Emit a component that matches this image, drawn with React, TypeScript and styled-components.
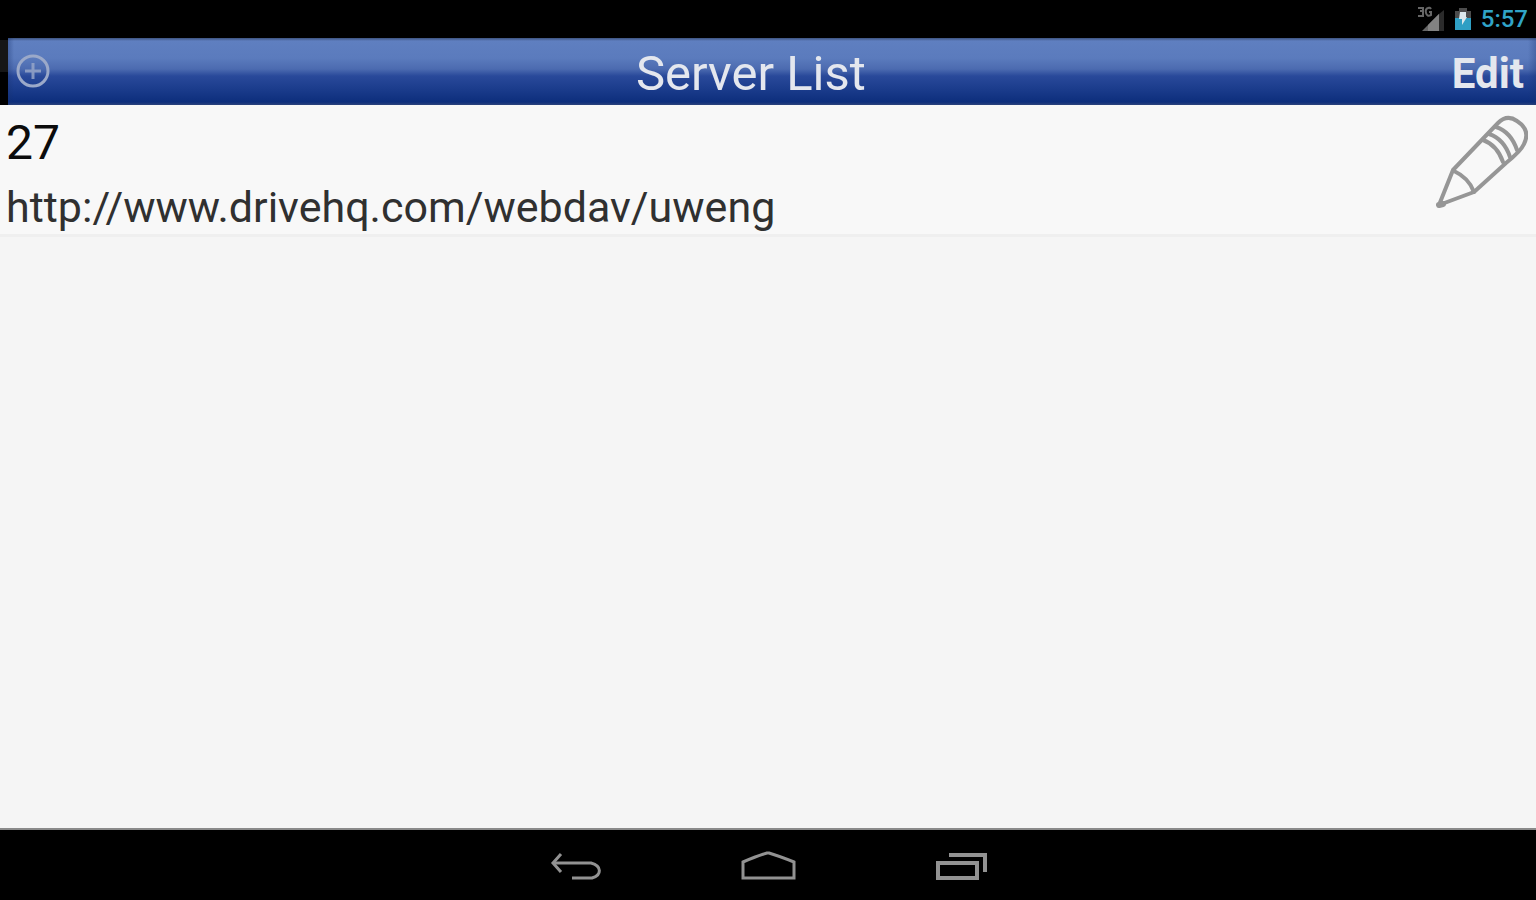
import React from "react";
import styled, { createGlobalStyle } from "styled-components";

const GlobalStyle = createGlobalStyle`
  *, *::before, *::after { box-sizing: border-box; }
  body { margin: 0; background: #000; font-family: Roboto, "Liberation Sans", sans-serif; }
  button { border: 0; padding: 0; margin: 0; background: none; font: inherit; color: inherit; cursor: pointer; }
  h1, h2, p, ul { margin: 0; padding: 0; font-weight: 400; }
  svg { display: block; flex: none; }
`;

const Screen = styled.div`
  min-height: 100vh;
  display: flex;
  flex-direction: column;
`;

const StatusBar = styled.div`
  height: 38px;
  padding: 0 8px;
  display: flex;
  align-items: center;
  justify-content: flex-end;
  gap: 9px;
  background: #000;
`;

const Clock = styled.time`
  font-size: 24px;
  line-height: 28px;
  font-weight: 500;
  color: #30a4c8;
`;

const HeaderFrame = styled.header`
  height: 67px;
  padding-left: 8px;
  background: linear-gradient(#000 0 2px, #161616 2px 50%, #000 50%);
`;

const Header = styled.div`
  height: 100%;
  padding: 0 12px 0 8px;
  display: flex;
  justify-content: space-between;
  align-items: center;
  color: #e4e7ee;
  background:
    linear-gradient(90deg, rgba(24, 50, 110, 0.35), transparent 6px calc(100% - 8px), rgba(24, 50, 110, 0.3)),
    linear-gradient(#3d5380 0, #5f7fc0 3px, #5b7bbd 20px, #4c6bb0 31px, #29499a 38px, #1c3d8d 50px, #0d2e7c 64px, #2c437c 67px);
`;

const AddButton = styled.button`
  line-height: 0;
`;

const Title = styled.h1`
  padding-top: 4px;
  font-size: 49px;
  line-height: 56px;
`;

const EditButton = styled.button`
  && {
    padding-top: 4px;
    font-size: 42px;
    line-height: 48px;
    font-weight: 700;
  }
`;

const Content = styled.main`
  flex: 1;
  background: #f5f5f5;
  border-bottom: 2px solid #8a8a8a;
`;

const ServerRow = styled.li`
  display: flex;
  justify-content: space-between;
  align-items: flex-start;
  padding: 8px 8px 0 6px;
  height: 132px;
  list-style: none;
  background: #f8f8f8;
  border-bottom: 3px solid #efefef;
`;

const ServerName = styled.h2`
  font-size: 48px;
  line-height: 60px;
  color: #0c0c0c;
`;

const ServerUrl = styled.p`
  padding-top: 4px;
  font-size: 43px;
  line-height: 60px;
  color: #303030;
`;

const RowButton = styled.button`
  padding-top: 2px;
`;

const NavBar = styled.nav`
  height: 70px;
  padding-top: 6px;
  display: flex;
  justify-content: center;
  align-items: center;
  gap: 136px;
  background: #000;
`;

const NavButton = styled.button`
  width: 56px;
  height: 36px;
`;

const SignalIcon = () => (
  <svg width="28" height="26" viewBox="0 0 28 26" aria-hidden="true">
    <path d="M22 8 27 4V25H22Z" fill="#2b2b2b" />
    <path d="M5 25 22 8V25Z" fill="#666" />
    <path d="M11 25V19L22 8V25Z" fill="#828282" />
    <path d="M1 2H6V5H3M6 5V10H1M14 3Q13 1 11 2Q8 3 9 7Q10 11 14 9V6H12" fill="none" stroke="#666" strokeWidth="2" />
  </svg>
);

const BatteryIcon = () => (
  <svg width="18" height="24" viewBox="0 0 18 24" aria-hidden="true">
    <path d="M5 1H13V4H17V12H1V4H5Z" fill="#4c4c4c" />
    <path d="M1 11H17V23H1Z" fill="#2f9fc4" />
    <path d="M6 5H12V10H13L8 18V12H5Z" fill="#dce8ec" />
  </svg>
);

const PlusIcon = () => (
  <svg width="34" height="36" viewBox="0 0 34 36" fill="none" stroke="#9ba9c9" aria-hidden="true">
    <circle cx="17" cy="17" r="15" strokeWidth="3" />
    <path d="M9 17H25M17 9V25" strokeWidth="3" strokeOpacity="0.8" />
  </svg>
);

const PencilIcon = () => (
  <svg width="92" height="94" viewBox="0 0 92 94" fill="none" stroke="#969696" strokeWidth="4" strokeLinecap="round" strokeLinejoin="round" aria-hidden="true">
    <path d="M3 90 17 55 62 8Q71 -1 81 6Q95 15 88 29Q85 36 70 48L38 77Z" />
    <path d="M18 56Q33 63 38 77" />
    <path d="M47 25Q61 30 67 47" />
    <path d="M53 19Q68 24 74 42" />
    <path d="M60 12Q75 17 81 35" />
    <path d="M3 90 7 89" strokeWidth="6" />
  </svg>
);

const BackIcon = () => (
  <svg width="56" height="36" viewBox="0 0 56 36" fill="none" stroke="#929292" strokeWidth="3" aria-hidden="true">
    <path d="M6 13H43C54 16 54 25 44 28H24" />
    <path d="M13 4 5 13 13 22" />
  </svg>
);

const HomeIcon = () => (
  <svg width="56" height="36" viewBox="0 0 56 36" fill="none" stroke="#929292" strokeWidth="3" aria-hidden="true">
    <path d="M3 28V12Q17 6 27 3H29Q39 6 54 12V28Z" />
  </svg>
);

const RecentsIcon = () => (
  <svg width="56" height="36" viewBox="0 0 56 36" fill="none" stroke="#929292" aria-hidden="true">
    <path d="M6 13H45V28H6Z" strokeWidth="4" />
    <path d="M17 5H53V22" strokeWidth="4" />
  </svg>
);

const servers = [{ name: "27", url: "http://www.drivehq.com/webdav/uweng" }];

export default function App() {
  return (
    <>
      <GlobalStyle />
      <Screen>
        <StatusBar>
          <SignalIcon />
          <BatteryIcon />
          <Clock>5:57</Clock>
        </StatusBar>
        <HeaderFrame>
          <Header>
            <AddButton type="button" aria-label="Add server"><PlusIcon /></AddButton>
            <Title>Server List</Title>
            <EditButton type="button">Edit</EditButton>
          </Header>
        </HeaderFrame>
        <Content>
          <ul>
            {servers.map((server) => (
              <ServerRow key={server.name}>
                <div>
                  <ServerName>{server.name}</ServerName>
                  <ServerUrl>{server.url}</ServerUrl>
                </div>
                <RowButton type="button" aria-label={`Edit server ${server.name}`}><PencilIcon /></RowButton>
              </ServerRow>
            ))}
          </ul>
        </Content>
        <NavBar>
          <NavButton type="button" aria-label="Back"><BackIcon /></NavButton>
          <NavButton type="button" aria-label="Home"><HomeIcon /></NavButton>
          <NavButton type="button" aria-label="Recent apps"><RecentsIcon /></NavButton>
        </NavBar>
      </Screen>
    </>
  );
}
